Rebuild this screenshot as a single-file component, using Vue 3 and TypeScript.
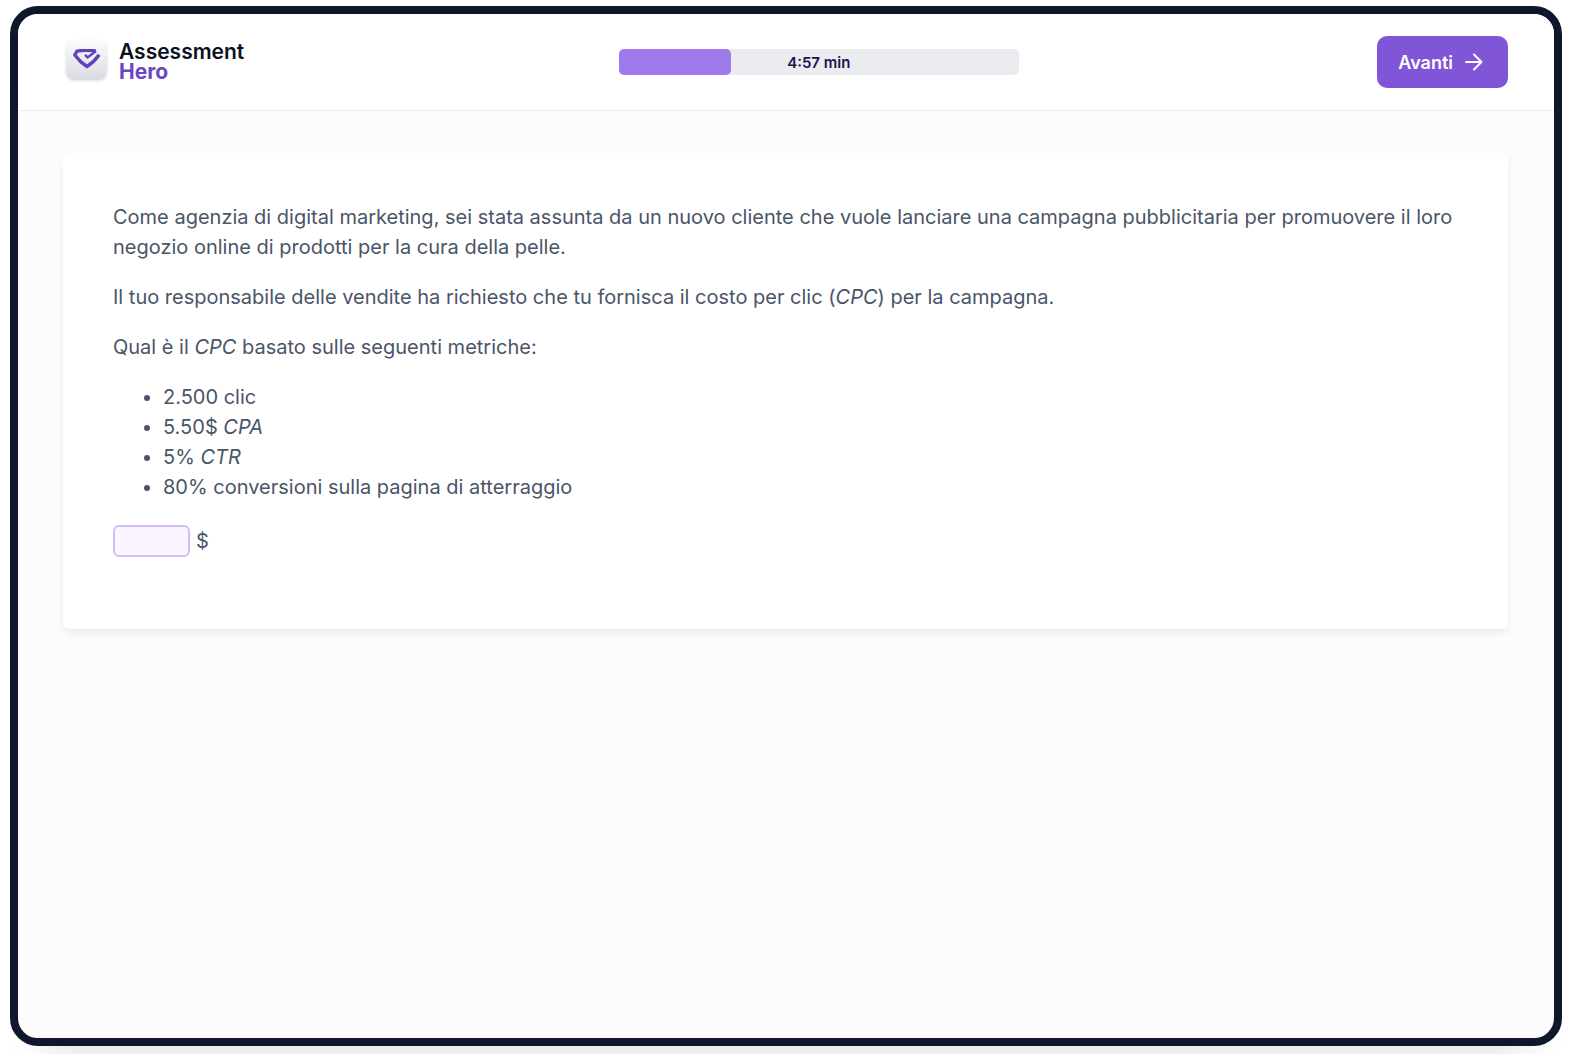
<script setup lang="ts">
import { ref } from 'vue'

const totalSeconds = 413
const remaining = ref(297)
const answer = ref('')

const progress = `${Math.round((1 - remaining.value / totalSeconds) * 100)}%`
const timeLabel = `${Math.floor(remaining.value / 60)}:${String(remaining.value % 60).padStart(2, '0')} min`
</script>

<template>
  <div class="stage">
    <div class="frame">
      <header class="topbar">
        <div class="brand">
          <span class="brand-badge">
            <svg viewBox="0 0 28 20" width="28" height="20" aria-hidden="true">
              <path
                d="M23 2C17 1.200 9 1.200 4 2.200L1.800 6C5 10.500 9.300 14.500 14 17.500C18.500 14.700 22.500 11 26.200 5.800"
                fill="none" stroke="#6540bd" stroke-width="3.400" stroke-linejoin="round"
              />
              <path d="M12 5.800L14.600 8.400L23 2" fill="none" stroke="#6540bd" stroke-width="2.400" />
            </svg>
          </span>
          <span class="brand-name">
            <span>Assessment</span>
            <strong>Hero</strong>
          </span>
        </div>
        <div class="timer">
          <div class="timer-fill" :style="{ width: progress }"></div>
          <span class="timer-label">{{ timeLabel }}</span>
        </div>
        <button class="next" type="button">
          Avanti
          <svg viewBox="0 0 18 18" width="18" height="18" aria-hidden="true">
            <path
              d="M1 9H16.500M9 1.500L16.500 9L9 16.500"
              fill="none" stroke="#fff" stroke-width="2" stroke-linecap="round" stroke-linejoin="round"
            />
          </svg>
        </button>
      </header>

      <main class="content">
        <section class="card">
          <p>
            Come agenzia di digital marketing, sei stata assunta da un nuovo cliente che vuole lanciare una
            campagna pubblicitaria per promuovere il loro negozio online di prodotti per la cura della pelle.
          </p>
          <p>
            Il tuo responsabile delle vendite ha richiesto che tu fornisca il costo per clic (<em>CPC</em>) per
            la campagna.
          </p>
          <p>Qual è il <em>CPC</em> basato sulle seguenti metriche:</p>
          <ul>
            <li>2.500 clic</li>
            <li>5.50$ <em>CPA</em></li>
            <li>5% <em>CTR</em></li>
            <li>80% conversioni sulla pagina di atterraggio</li>
          </ul>
          <div class="answer">
            <input id="answer" v-model="answer" type="text" inputmode="decimal" />
            <label for="answer">$</label>
          </div>
        </section>
      </main>
    </div>
  </div>
</template>

<style>
body {
  background: #fff;
}
</style>

<style scoped>
.stage {
  box-sizing: border-box;
  min-height: 100vh;
  padding: 6px 7px 8px 10px;
  display: flex;
  overflow: hidden;
  font-family: Inter, "Liberation Sans", sans-serif;
}

.frame {
  flex: 1;
  min-width: 0;
  border: 8px solid #0f172a;
  border-radius: 28px;
  overflow: hidden;
  background: #fcfcfc;
  box-shadow: 0 40px 40px -36px rgba(0, 0, 0, 0.14);
}

.topbar {
  display: flex;
  align-items: center;
  justify-content: space-between;
  padding: 22px 46px 22px 48px;
  background: #fff;
  border-bottom: 1px solid #eeeff1;
}

.brand {
  display: flex;
  align-items: center;
  gap: 12px;
  padding-right: 16px;
}

.brand-badge {
  display: flex;
  align-items: center;
  justify-content: center;
  box-sizing: border-box;
  width: 41px;
  height: 40px;
  margin-bottom: 4px;
  padding-bottom: 2px;
  border-radius: 8px;
  background: linear-gradient(#fcfcfd, #d8dbe1);
  box-shadow: 0 1px 3px rgba(0, 0, 0, 0.12);
}

.brand-name {
  display: flex;
  flex-direction: column;
  color: #0b1120;
  font-size: 21px;
  font-weight: 600;
  line-height: 20px;
}

.brand-name strong {
  color: #6b46c1;
  font-weight: 700;
}

.timer {
  display: grid;
  width: 400px;
  height: 26px;
  border-radius: 5px;
  background: #ebecef;
}

.timer-fill,
.timer-label {
  grid-area: 1 / 1;
}

.timer-fill {
  border-radius: 5px;
  background: #9f7aea;
}

.timer-label {
  align-self: center;
  text-align: center;
  color: #21134f;
  font-size: 15px;
  font-weight: 600;
}

.next {
  display: flex;
  align-items: center;
  gap: 12px;
  height: 52px;
  padding: 0 25px 0 21px;
  border: 0;
  border-radius: 10px;
  background: #8055d7;
  color: #fff;
  font: 600 18px Inter, "Liberation Sans", sans-serif;
}

.content {
  padding: 42px 46px 42px 45px;
}

.card {
  padding: 49px 50px 70px;
  border-radius: 6px;
  background: #fff;
  box-shadow: 0 5px 8px -1px rgba(0, 0, 0, 0.06), 0 2px 14px rgba(0, 0, 0, 0.02);
  color: #4a5568;
  font-size: 20px;
  line-height: 30px;
}

.card p,
.card ul {
  margin: 0 0 20px;
}

.card ul {
  padding-left: 50px;
}

.answer {
  display: flex;
  align-items: center;
  gap: 6px;
  height: 37px;
}

.answer input {
  box-sizing: border-box;
  width: 77px;
  height: 32px;
  padding: 0 8px;
  border: 2px solid #d6bcfa;
  border-radius: 6px;
  background: #faf5ff;
  color: inherit;
  font: inherit;
}
</style>
